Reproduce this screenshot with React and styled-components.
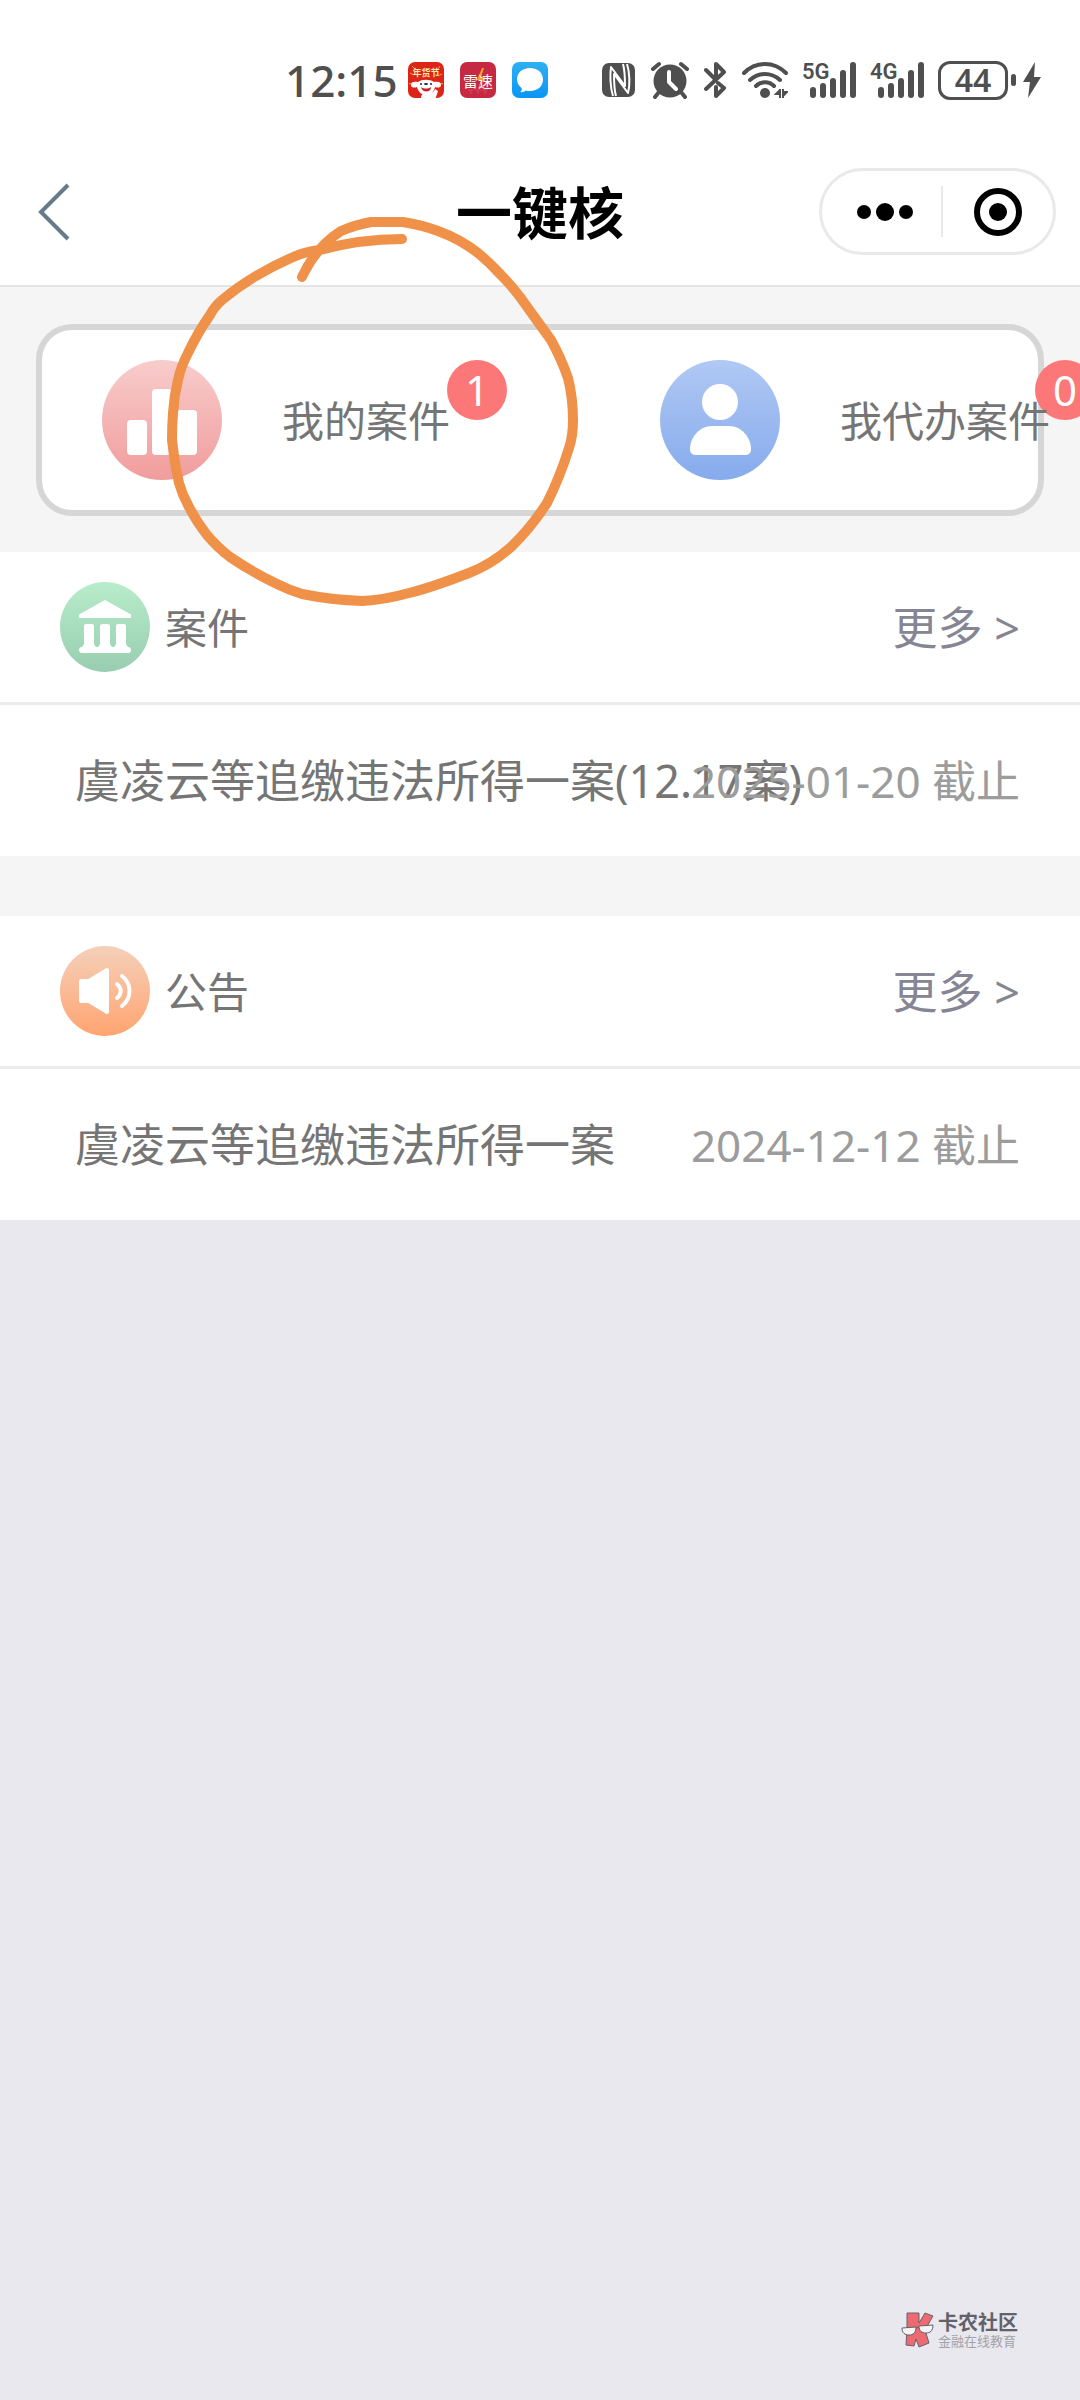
import React from "react";
import styled, { createGlobalStyle } from "styled-components";

const GlobalStyle = createGlobalStyle`
  * {
    box-sizing: border-box;
  }

  body {
    margin: 0;
    background-color: #e8e8ee;
    font-family: "Noto Sans", "Noto Sans CJK SC", sans-serif;
    color: #757575;
  }

  h1, h2, p, ul {
    margin: 0;
    padding: 0;
    font-weight: 400;
  }

  svg {
    display: block;
    flex-shrink: 0;
  }
`;

const Page = styled.div`
  position: relative;
  display: flex;
  flex-direction: column;
  min-height: 100vh;
  overflow: hidden;
`;

const StatusBar = styled.div`
  display: flex;
  justify-content: space-between;
  align-items: center;
  height: 136px;
  padding: 24px 38px 0 285px;
  background-color: #fff;
  color: #4f4f4f;
`;

const StatusGroup = styled.div`
  display: flex;
  align-items: center;
  gap: ${({ $gap }) => $gap}px;
`;

const Time = styled.span`
  font-size: 44px;
  line-height: 48px;
  font-weight: 500;
`;

const Battery = styled.div`
  display: flex;
  align-items: center;
  gap: 3px;

  &::after {
    content: "";
    width: 5px;
    height: 12px;
    border-radius: 3px;
    background-color: #4f4f4f;
  }
`;

const BatteryLevel = styled.span`
  display: flex;
  justify-content: center;
  align-items: center;
  width: 70px;
  height: 39px;
  border: 3px solid #4f4f4f;
  border-radius: 12px;
  font-size: 32px;
  line-height: 32px;
  font-weight: 600;
`;

const Header = styled.header`
  display: grid;
  grid-template-columns: 1fr auto 1fr;
  align-items: center;
  height: 151px;
  padding: 2px 24px 0;
  background-color: #fff;
  border-bottom: 2px solid #e4e4e4;
`;

const BackButton = styled.button`
  justify-self: start;
  padding: 0 12px;
  border: none;
  background: none;
  cursor: pointer;
`;

const Title = styled.h1`
  font-size: 56px;
  line-height: 64px;
  font-weight: 700;
  color: #000;
`;

const Capsule = styled.div`
  justify-self: end;
  display: flex;
  align-items: center;
  width: 237px;
  height: 87px;
  border: 3px solid #e9e9e9;
  border-radius: 44px;
`;

const CapsuleButton = styled.button`
  display: flex;
  flex: 1;
  justify-content: center;
  align-items: center;
  height: 51px;
  padding: 0 0 0 8px;
  border: none;
  background: none;
  cursor: pointer;

  & + & {
    padding: 0;
    border-left: 2px solid #e9e9e9;
  }
`;

const Summary = styled.nav`
  padding: 37px 36px 36px;
  background-color: #f5f5f5;
`;

const SummaryCard = styled.div`
  display: grid;
  grid-template-columns: 1fr 1fr;
  height: 192px;
  border: 6px solid #d6d6d6;
  border-radius: 36px;
  background-color: #fff;
`;

const SummaryItem = styled.a`
  display: flex;
  align-items: center;
  gap: 60px;
  min-width: 0;
  padding-left: ${({ $indent }) => $indent}px;
  color: #757575;
  text-decoration: none;
  white-space: nowrap;
`;

const SummaryText = styled.div`
  isolation: isolate;
  padding-top: 2px;
`;

const SummaryLabel = styled.span`
  position: relative;
  font-size: 42px;
  line-height: 60px;
`;

const Badge = styled.span`
  position: absolute;
  z-index: -1;
  bottom: 29px;
  left: calc(100% - ${({ $overlap }) => $overlap}px);
  width: 60px;
  height: 60px;
  border-radius: 50%;
  background-color: #fc7878;
  color: #fff;
  text-align: center;
`;

const Section = styled.section`
  background-color: #fff;

  & + & {
    border-top: 60px solid #f5f5f5;
  }
`;

const SectionHead = styled.div`
  display: flex;
  align-items: center;
  gap: 15px;
  height: 153px;
  padding: 0 60px;
  border-bottom: 3px solid #ececec;
`;

const SectionTitle = styled.h2`
  flex: 1;
  padding-top: 2px;
  font-size: 42px;
  line-height: 60px;
`;

const MoreLink = styled.a`
  padding-top: 2px;
  font-size: 45px;
  line-height: 60px;
  color: #858594;
  text-decoration: none;
`;

const List = styled.ul`
  list-style: none;
`;

const ListItem = styled.li`
  display: flex;
  align-items: center;
  height: 151px;
  padding: 0 60px 0 75px;
  white-space: nowrap;
`;

// long names run under the deadline instead of wrapping
const ItemName = styled.p`
  flex: 1;
  min-width: 0;
  font-size: 45px;
  line-height: 60px;
`;

const Deadline = styled.span`
  font-size: 44px;
  line-height: 60px;
  color: #9c9c9c;
`;

const Footer = styled.footer`
  display: flex;
  justify-content: flex-end;
  align-items: center;
  gap: 3px;
  margin-top: auto;
  padding: 0 62px 52px;
`;

const BrandName = styled.p`
  font-size: 20px;
  line-height: 22px;
  font-weight: 700;
  color: #62626a;
`;

const BrandSlogan = styled.p`
  font-size: 13px;
  line-height: 14px;
  color: #a2a2aa;
`;

const Marker = styled.svg`
  position: absolute;
  top: 210px;
  left: 160px;
  pointer-events: none;
`;

const FestivalIcon = () => (
  <svg width="36" height="36" viewBox="0 0 36 36">
    <rect width="36" height="36" rx="7" fill="#de2418" />
    <path d="M2 11l4 2M1 22l4-1M34 12l-4 2M35 22l-4-1M4 4l3 3M32 4l-2 3" stroke="#f6a04c" strokeWidth="1" />
    <text x="18" y="14" textAnchor="middle" fontSize="9" fontWeight="700" fill="#ffe9a8">年货节</text>
    <path d="M3 23c0-3 3-4 7-3 4-3 12-3 16 0 4-1 7 0 7 3s-4 3-6 2c-1 5-5 8-9 8s-8-3-9-8c-2 1-6 1-6-2z" fill="#fff" />
    <path d="M13 36c0-4 3-5 6-5 5 0 7-1 8-4l3 2c-1 4-2 5-2 7z" fill="#fff" />
    <circle cx="13" cy="22" r="1" fill="#222" />
    <circle cx="23" cy="22" r="1" fill="#222" />
    <ellipse cx="18" cy="22" rx="2" ry="1" fill="#222" />
    <path d="M13 25c3 2 7 2 10 0 0 6-9 6-10 0z" fill="#c8202a" />
  </svg>
);

const SportsIcon = () => (
  <svg width="36" height="36" viewBox="0 0 36 36">
    <rect width="36" height="36" rx="7" fill="#c62a42" />
    <path d="M11 28v4M18 28v4M25 28v4M8 28h6M15 28h6M22 28h6" stroke="#e0455b" strokeWidth="1" />
    <path d="M22 6l-5 12h4l-3 9 7-12h-4l3-9z" fill="#f6a12c" />
    <text x="18" y="25" textAnchor="middle" fontSize="15" fontWeight="400" fill="#fff">雷速</text>
  </svg>
);

const ChatIcon = () => (
  <svg width="36" height="36" viewBox="0 0 36 36">
    <defs>
      <linearGradient id="chat" x1="0" y1="0" x2="0" y2="1">
        <stop offset="0" stopColor="#2fb0f2" />
        <stop offset="1" stopColor="#0a96f6" />
      </linearGradient>
    </defs>
    <rect width="36" height="36" rx="7" fill="url(#chat)" />
    <path d="M18 6c8 0 13 5 13 11.500S26 29 18 29c-2 0-3 0-4-.5-1 1-3 2-6 1.500 2-1 2-2 1.500-4C7 24 5 21 5 17.500 5 11 10 6 18 6z" fill="#fff" />
  </svg>
);

const NfcIcon = () => (
  <svg width="34" height="34" viewBox="0 0 34 34">
    <rect width="33" height="34" rx="7" fill="#4f4f4f" />
    <path d="M11 33C8 24 8 11 9 4l14 19c0-8 0-15-2-22M25 1c3 9 3 22 1 29L12 11c0 8 0 15 2 22" fill="none" stroke="#fff" strokeWidth="2" strokeLinejoin="round" />
  </svg>
);

const AlarmIcon = () => (
  <svg width="40" height="38" viewBox="0 0 40 38">
    <circle cx="20" cy="20" r="16.500" fill="#4f4f4f" />
    <path d="M3 8l6-5M31 3l6 5M9 31l-4 5M31 31l4 5" stroke="#4f4f4f" strokeWidth="4" strokeLinecap="round" />
    <path d="M19 11v10l7 7" fill="none" stroke="#fff" strokeWidth="4" strokeLinecap="round" strokeLinejoin="round" />
  </svg>
);

const BluetoothIcon = () => (
  <svg width="24" height="38" viewBox="0 0 24 38">
    <path d="M2 9l9 9M2 28L20 11l-8-8v14M12 26v9l8-8-6-5" fill="none" stroke="#4f4f4f" strokeWidth="4" strokeLinecap="round" strokeLinejoin="round" />
  </svg>
);

const WifiIcon = () => (
  <svg width="46" height="38" viewBox="0 0 46 38">
    <path d="M2 12c12-12 30-12 42 0M8 19c9-8 21-8 30 0M14 25c5-5 13-5 18 0" fill="none" stroke="#4f4f4f" strokeWidth="4" strokeLinecap="round" />
    <circle cx="23" cy="32" r="5" fill="#4f4f4f" />
    <path d="M38 28v9M38 29l-4 4h4M41 37v-9M41 35l4-4h-4" stroke="#4f4f4f" strokeWidth="2" fill="#4f4f4f" />
  </svg>
);

const SignalIcon = ({ network }) => (
  <svg width="54" height="38" viewBox="0 0 54 38" overflow="visible">
    <text x="0" y="18" fontSize="22" fontWeight="600" fontFamily="Roboto" fill="#4f4f4f">{network}</text>
    <path d="M11 29v5M21 25v9M31 20v14M41 12v22M51 4v30" stroke="#4f4f4f" strokeWidth="6" strokeLinecap="round" />
  </svg>
);

const BoltIcon = () => (
  <svg width="20" height="38" viewBox="0 0 20 38">
    <path d="M13 1L1 21h7L6 37l13-21h-7z" fill="#4f4f4f" />
  </svg>
);

const Disc = ({ id, size, from, to, children }) => (
  <svg width={size} height={size} viewBox={`0 0 ${size} ${size}`}>
    <defs>
      <linearGradient id={id} x1="0" y1="0" x2="0" y2="1">
        <stop offset="0" stopColor={from} />
        <stop offset="1" stopColor={to} />
      </linearGradient>
    </defs>
    <circle cx={size / 2} cy={size / 2} r={size / 2} fill={`url(#${id})`} />
    {children}
  </svg>
);

const ChartIcon = () => (
  <Disc id="chart" size={120} from="#f8cccc" to="#f19c9c">
    <rect x="25" y="60" width="20" height="35" rx="4" fill="#fff" />
    <rect x="50" y="29" width="20" height="66" rx="4" fill="#fff" />
    <rect x="75" y="50" width="20" height="45" rx="4" fill="#fff" />
  </Disc>
);

const PersonIcon = () => (
  <Disc id="person" size={120} from="#b0c8f4" to="#86abec">
    <circle cx="60" cy="42" r="18" fill="#fff" />
    <path d="M52 66h17c13 0 22 12 22 23 0 4-2 6-7 6H37c-5 0-7-2-7-6 0-11 9-23 22-23z" fill="#fff" />
  </Disc>
);

const CourtIcon = () => (
  <Disc id="court" size={90} from="#b8ecca" to="#98cdb0">
    <path d="M45 19l25 14v2H20v-2z" fill="#fff" stroke="#fff" strokeWidth="2" strokeLinejoin="round" />
    <path d="M26 42h6q2 0 2 2v18l2 3H22l2-3V44q0-2 2-2zM43 42h4q3 0 3 2v18l2 3H38l2-3V44q0-2 3-2zM58 42h6q2 0 2 2v18l2 3H54l2-3V44q0-2 2-2z" fill="#fff" />
    <rect x="19" y="65" width="52" height="6" rx="3" fill="#fff" />
  </Disc>
);

const SpeakerIcon = () => (
  <Disc id="speaker" size={90} from="#f5d0ba" to="#ffa470">
    <path d="M21 35h8l18-11v42L29 55h-8z" fill="#fff" stroke="#fff" strokeWidth="4" strokeLinejoin="round" />
    <path d="M57 38c5 4 5 10 0 14M62 30c10 8 10 22 0 30" fill="none" stroke="#fff" strokeWidth="4" strokeLinecap="round" />
  </Disc>
);

const BrandLogo = () => (
  <svg width="34" height="36" viewBox="0 0 34 36">
    <path d="M6 1h12v10l6-10 8 3-8 14 4 13-10 4-3-8-2 7-8-1 1-16z" fill="#ee6a72" stroke="#62626a" strokeWidth="1" />
    <path d="M1 16l14-1c0 6-3 8-7 8s-7-2-7-7zM18 14l14-1c0 6-3 8-7 8s-7-2-7-7zM15 16l3-1" fill="#f4f4f7" stroke="#62626a" strokeWidth="1" />
  </svg>
);

const summary = [
  { label: "我的案件", count: 1, icon: <ChartIcon />, indent: 60, overlap: 3 },
  { label: "我代办案件", count: 0, icon: <PersonIcon />, indent: 120, overlap: 15 },
];

const sections = [
  {
    title: "案件",
    icon: <CourtIcon />,
    items: [{ name: "虞凌云等追缴违法所得一案(12.17案)", deadline: "2025-01-20 截止" }],
  },
  {
    title: "公告",
    icon: <SpeakerIcon />,
    items: [{ name: "虞凌云等追缴违法所得一案", deadline: "2024-12-12 截止" }],
  },
];

const App = () => {
  return (
    <Page>
      <GlobalStyle />
      <StatusBar>
        <StatusGroup $gap={10}>
          <Time>12:15</Time>
          <StatusGroup $gap={16}>
            <FestivalIcon />
            <SportsIcon />
            <ChatIcon />
          </StatusGroup>
        </StatusGroup>
        <StatusGroup $gap={14}>
          <NfcIcon />
          <AlarmIcon />
          <BluetoothIcon />
          <WifiIcon />
          <SignalIcon network="5G" />
          <SignalIcon network="4G" />
          <StatusGroup $gap={6}>
            <Battery>
              <BatteryLevel>44</BatteryLevel>
            </Battery>
            <BoltIcon />
          </StatusGroup>
        </StatusGroup>
      </StatusBar>

      <Header>
        <BackButton type="button" aria-label="返回">
          <svg width="36" height="60" viewBox="0 0 36 60">
            <path d="M32 3L5 30l27 27" fill="none" stroke="#667a8b" strokeWidth="4" />
          </svg>
        </BackButton>
        <Title>一键核</Title>
        <Capsule>
          <CapsuleButton type="button" aria-label="更多">
            <svg width="58" height="20" viewBox="0 0 58 20">
              <circle cx="8" cy="10" r="7" />
              <circle cx="29" cy="10" r="9" />
              <circle cx="50" cy="10" r="7" />
            </svg>
          </CapsuleButton>
          <CapsuleButton type="button" aria-label="关闭">
            <svg width="48" height="48" viewBox="0 0 48 48">
              <circle cx="24" cy="24" r="21" fill="none" stroke="#000" strokeWidth="6" />
              <circle cx="24" cy="24" r="9" />
            </svg>
          </CapsuleButton>
        </Capsule>
      </Header>

      <Summary>
        <SummaryCard>
          {summary.map((item) => (
            <SummaryItem key={item.label} href="#" $indent={item.indent}>
              {item.icon}
              <SummaryText>
                <SummaryLabel>
                  {item.label}
                  <Badge $overlap={item.overlap}>{item.count}</Badge>
                </SummaryLabel>
              </SummaryText>
            </SummaryItem>
          ))}
        </SummaryCard>
      </Summary>

      <main>
        {sections.map((section) => (
          <Section key={section.title}>
            <SectionHead>
              {section.icon}
              <SectionTitle>{section.title}</SectionTitle>
              <MoreLink href="#">更多 &gt;</MoreLink>
            </SectionHead>
            <List>
              {section.items.map((item) => (
                <ListItem key={item.name}>
                  <ItemName>{item.name}</ItemName>
                  <Deadline>{item.deadline}</Deadline>
                </ListItem>
              ))}
            </List>
          </Section>
        ))}
      </main>

      <Footer>
        <BrandLogo />
        <div>
          <BrandName>卡农社区</BrandName>
          <BrandSlogan>金融在线教育</BrandSlogan>
        </div>
      </Footer>

      {/* hand-drawn highlight round the first entry */}
      <Marker width="430" height="400" viewBox="160 210 430 400">
        <path
          d="M302 277Q316 247 341 231Q355 225 371 222L403 222Q422 225 438 231Q460 239 478 253Q490 263 501 275Q511 285 520 297L551 340Q561 358 568 378Q573 398 573 420Q573 436 569 448Q560 477 547 503Q530 529 511 547Q492 564 469 573Q430 588 409 593Q384 600 362 601Q332 600 302 594Q289 590 277 584Q252 572 230 557Q217 547 207 535Q196 521 188 505Q182 494 179 483Q174 462 172 440Q172 426 173 413Q174 396 178 380Q181 366 188 353Q198 332 210 315Q214 307 222 300Q239 286 256 276Q273 266 291 258Q306 251 320 250Q360 239 402 239"
          fill="none"
          stroke="#f0914a"
          strokeWidth="10"
          strokeLinecap="round"
          strokeLinejoin="round"
        />
      </Marker>
    </Page>
  );
};

export default App;
